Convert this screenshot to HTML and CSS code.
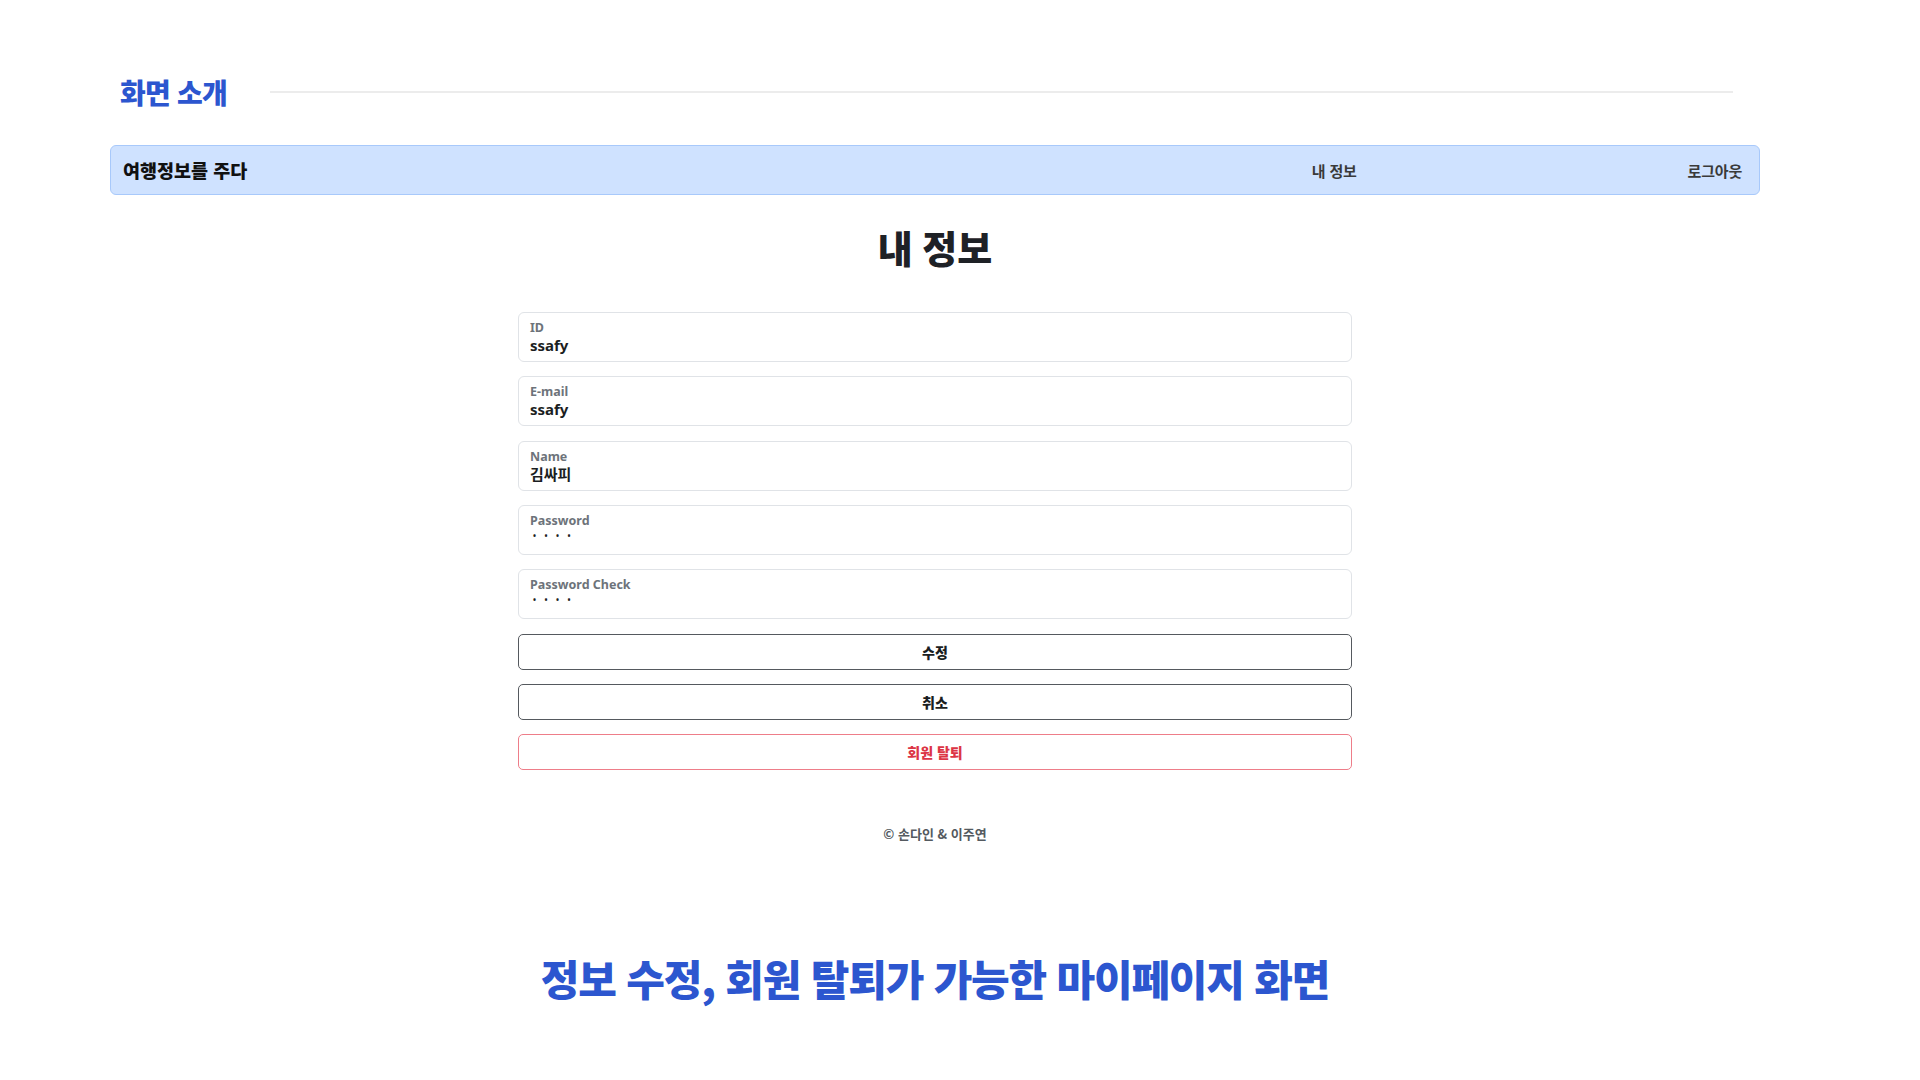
FILE: index.html
```html
<!DOCTYPE html>
<html lang="ko">
<head>
<meta charset="utf-8">
<title>화면 소개</title>
<link rel="stylesheet" href="styles.css">
</head>
<body>
<div class="slide">
  <div class="slide-head">
    <h1 class="slide-title">화면 소개</h1>
    <div class="slide-rule"></div>
  </div>

  <div class="shot">
    <nav class="navbar">
      <div class="brand">여행정보를 주다</div>
      <div class="nav-links">
        <a class="nav-link">내 정보</a>
        <a class="nav-link">로그아웃</a>
      </div>
    </nav>

    <h2 class="page-title">내 정보</h2>

    <form class="form">
      <div class="field">
        <span class="field-label">ID</span>
        <span class="field-value">ssafy</span>
      </div>
      <div class="field">
        <span class="field-label">E-mail</span>
        <span class="field-value">ssafy</span>
      </div>
      <div class="field">
        <span class="field-label">Name</span>
        <span class="field-value">김싸피</span>
      </div>
      <div class="field">
        <span class="field-label">Password</span>
        <span class="field-value dots">••••</span>
      </div>
      <div class="field">
        <span class="field-label">Password Check</span>
        <span class="field-value dots">••••</span>
      </div>
      <div class="buttons">
        <button type="button" class="btn btn-dark">수정</button>
        <button type="button" class="btn btn-dark">취소</button>
        <button type="button" class="btn btn-danger">회원 탈퇴</button>
      </div>
    </form>

    <footer class="footer">© 손다인 &amp; 이주연</footer>
  </div>

  <p class="caption">정보 수정, 회원 탈퇴가 가능한 마이페이지 화면</p>
</div>
</body>
</html>
```

FILE: styles.css
```css
* { box-sizing: border-box; }
html, body { margin: 0; padding: 0; background: #ffffff; }
body {
  width: 1920px;
  height: 1080px;
  overflow: hidden;
  font-family: "Noto Sans", "Noto Sans CJK KR", sans-serif;
  color: #212529;
}

.slide { display: flex; flex-direction: column; }

.slide-head {
  display: flex;
  align-items: center;
  padding: 77px 187px 0 120px;
}
.slide-title {
  margin: 0;
  font-family: "Noto Sans CJK KR", sans-serif;
  font-weight: 900;
  font-size: 28px;
  line-height: 30px;
  letter-spacing: -0.8px;
  color: #2c56cf;
}
.slide-rule {
  flex: 1;
  height: 2px;
  background: #ececec;
  margin-left: 43px;
}

.shot {
  margin: 38px 160px 0 110px;
  display: flex;
  flex-direction: column;
}

.navbar {
  display: flex;
  align-items: center;
  height: 50px;
  padding: 0 17px 0 12px;
  background: #cfe2ff;
  border: 1px solid #a8c9fb;
  border-radius: 6px;
}
.brand {
  flex: 1;
  font-family: "Noto Sans CJK KR", sans-serif;
  font-weight: 900;
  font-size: 18.5px;
  letter-spacing: 0px;
  color: #111111;
}
.nav-links { display: flex; gap: 331px; }
.nav-link {
  font-family: "Noto Sans CJK KR", sans-serif;
  font-weight: 700;
  font-size: 15px;
  letter-spacing: -0.2px;
  color: #3a3a3a;
}

.page-title {
  margin: 28px 0 0;
  text-align: center;
  font-family: "Noto Sans CJK KR", sans-serif;
  font-weight: 900;
  font-size: 38px;
  line-height: 48px;
  word-spacing: -1px;
  color: #1e2126;
}

.form {
  width: 834px;
  margin: 41px auto 0;
  display: flex;
  flex-direction: column;
  gap: 14.25px;
}
.field {
  height: 50px;
  border: 1px solid #e0e3e7;
  border-radius: 6px;
  padding: 7px 12px 0 11px;
  display: flex;
  flex-direction: column;
}
.field-label {
  font-family: "Noto Sans", "Noto Sans CJK KR", sans-serif;
  font-weight: 700;
  font-size: 12.5px;
  line-height: 15px;
  color: #6d737a;
}
.field-value {
  font-family: "Noto Sans", "Noto Sans CJK KR", sans-serif;
  font-weight: 700;
  font-size: 15px;
  line-height: 20px;
  color: #1b1e22;
}
.field-value.dots {
  font-size: 8px;
  line-height: 16px;
  letter-spacing: 8.5px;
  padding-left: 3px;
}

.buttons {
  display: flex;
  flex-direction: column;
  gap: 14px;
  margin-top: 1px;
}
.btn {
  height: 36px;
  width: 100%;
  background: #ffffff;
  border-radius: 5px;
  font-family: "Noto Sans CJK KR", sans-serif;
  font-weight: 900;
  font-size: 14px;
  cursor: pointer;
}
.btn-dark { border: 1px solid #55595e; color: #1a1d21; }
.btn-danger { border: 1px solid #ee7d89; color: #dc3545; }

.footer {
  margin-top: 55px;
  text-align: center;
  font-family: "Noto Sans CJK KR", sans-serif;
  font-weight: 700;
  font-size: 13px;
  line-height: 18px;
  color: #545a60;
}

.caption {
  margin: 110px 0 0;
  text-align: center;
  padding-right: 50px;
  font-family: "Noto Sans CJK KR", sans-serif;
  font-weight: 900;
  font-size: 42px;
  line-height: 50px;
  letter-spacing: -1.2px;
  color: #2c56cf;
}
```
